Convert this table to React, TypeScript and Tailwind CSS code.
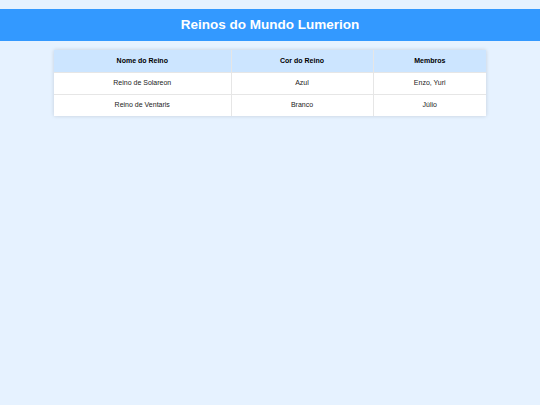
const reinos = [
  { nome: "Reino de Solareon", cor: "Azul", membros: "Enzo, Yuri" },
  { nome: "Reino de Ventaris", cor: "Branco", membros: "Júlio" },
];

export default function App() {
  return (
    <div className="min-h-[405px] bg-[#e6f2ff] pt-[9px] font-['Liberation_Sans',Arial,sans-serif]">
      <header className="bg-[#3399ff] h-[32px] flex items-center justify-center">
        <h1 className="text-white text-[13.5px] font-bold">Reinos do Mundo Lumerion</h1>
      </header>

      <table className="w-[432px] mx-auto mt-[9px] border-collapse bg-white shadow-[0_0_4px_rgba(0,0,0,0.15)] text-[7px] text-[#222]">
        <thead>
          <tr className="bg-[#cce5ff] h-[22px]">
            <th className="font-bold px-2 border-r border-[#e6e6e6] text-black">Nome do Reino</th>
            <th className="font-bold px-2 border-r border-[#e6e6e6] text-black">Cor do Reino</th>
            <th className="font-bold px-2 text-black">Membros</th>
          </tr>
        </thead>
        <tbody>
          {reinos.map((r) => (
            <tr key={r.nome} className="h-[22px] border-t border-[#e6e6e6]">
              <td className="text-center px-2 border-r border-[#e6e6e6] w-[177px]">{r.nome}</td>
              <td className="text-center px-2 border-r border-[#e6e6e6] w-[142px]">{r.cor}</td>
              <td className="text-center px-2">{r.membros}</td>
            </tr>
          ))}
        </tbody>
      </table>
    </div>
  );
}
